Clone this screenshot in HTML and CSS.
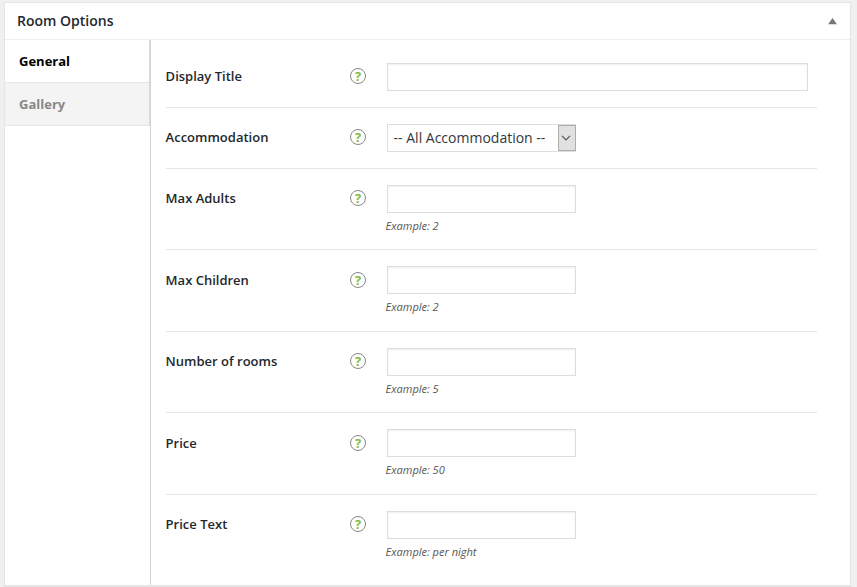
FILE: index.html
```
<!DOCTYPE html>
<html lang="en">
<head>
<meta charset="utf-8">
<title>Room Options</title>
<link rel="stylesheet" href="styles.css">
</head>
<body>
<section class="panel">
  <header class="panel-header">
    <h2>Room Options</h2>
    <svg class="toggle" width="9" height="7" viewBox="0 0 9 7"><path d="M4.5 0 8.9 6.3H.1z" fill="#72777c"/></svg>
  </header>
  <div class="panel-body">
    <nav class="tabs">
      <a class="tab active">General</a>
      <a class="tab">Gallery</a>
    </nav>
    <div class="fields">
      <div class="row">
        <label>Display Title</label><span class="help">?</span>
        <div class="control"><input class="wide" type="text"></div>
      </div>
      <div class="row">
        <label>Accommodation</label><span class="help">?</span>
        <div class="control"><div class="select"><span>-- All Accommodation --</span><i><svg width="10" height="6" viewBox="0 0 10 6"><path d="M1 .8 5 4.8 9 .8" fill="none" stroke="#555" stroke-width="1.2"/></svg></i></div></div>
      </div>
      <div class="row noted">
        <label>Max Adults</label><span class="help">?</span>
        <div class="control"><input type="text"><p>Example: 2</p></div>
      </div>
      <div class="row noted low">
        <label>Max Children</label><span class="help">?</span>
        <div class="control"><input type="text"><p>Example: 2</p></div>
      </div>
      <div class="row noted">
        <label>Number of rooms</label><span class="help">?</span>
        <div class="control"><input type="text"><p>Example: 5</p></div>
      </div>
      <div class="row noted low">
        <label>Price</label><span class="help">?</span>
        <div class="control"><input type="text"><p>Example: 50</p></div>
      </div>
      <div class="row noted">
        <label>Price Text</label><span class="help">?</span>
        <div class="control"><input type="text"><p>Example: per night</p></div>
      </div>
    </div>
  </div>
</section>
</body>
</html>
```
FILE: styles.css
```
* { box-sizing: border-box; }
body {
  margin: 0;
  height: 587px;
  padding: 2px 6px 1px 4px;
  overflow: hidden;
  background: #f0f0f0;
  font-family: "Open Sans", sans-serif;
  font-size: 13px;
  color: #23282d;
}
.panel {
  display: flex;
  flex-direction: column;
  height: 584px;
  background: #fff;
  border: 1px solid #e5e5e5;
  box-shadow: 0 1px 1px rgba(0, 0, 0, .04);
}
.panel-header {
  display: flex;
  align-items: center;
  justify-content: space-between;
  height: 37px;
  padding: 0 13px 0 12px;
  border-bottom: 1px solid #eee;
}
h2 { margin: 0; font-size: 14px; line-height: 20px; font-weight: 600; }
.panel-body { display: flex; flex: 1; }
.tabs { width: 146px; border-right: 1px solid #d5d5d5; }
.tab {
  display: block;
  height: 43px;
  padding-left: 14px;
  line-height: 42px;
  font-weight: 700;
  color: #888;
  background: #f4f4f4;
  border-right: 1px solid #d8d8d8;
  border-bottom: 1px solid #e5e5e5;
}
.tab.active { color: #000; background: #fff; }
.fields { width: 666px; padding: 7px 0 0 15px; }
.row {
  display: flex;
  align-items: flex-start;
  height: 61px;
  padding-top: 16px;
  border-bottom: 1px solid #e5e5e5;
}
.row.noted { height: 81px; }
.row.low { height: 82px; }
.row:last-child { border-bottom: 0; }
label { width: 184px; line-height: 18px; margin-top: 4px; font-weight: 600; text-indent: -.4px; }
.help {
  width: 16px;
  height: 16px;
  margin-top: 5px;
  border: 1px solid #888;
  border-radius: 50%;
  text-align: center;
  font-size: 13px;
  line-height: 14px;
  font-weight: 700;
  color: #84bd3c;
}
.low label { margin-top: 5px; }
.low .help { margin-top: 6px; }
.control { margin-left: 21px; }
input {
  display: block;
  width: 189px;
  height: 28px;
  margin: 0;
  padding: 3px 5px;
  border: 1px solid #ddd;
  background: #fff;
  box-shadow: inset 0 1px 2px rgba(0, 0, 0, .07);
  font: inherit;
  outline: 0;
}
input.wide { width: 421px; }
.control p {
  margin: 5px 0 0 -1px;
  font-size: 11px;
  line-height: 16px;
  font-style: italic;
  color: #555;
  text-indent: -.4px;
}
.select {
  display: flex;
  justify-content: space-between;
  width: 189px;
  height: 28px;
  padding-left: 5.6px;
  border: 1px solid #ddd;
  font-size: 14px;
  line-height: 26px;
  color: #32373c;
  white-space: nowrap;
}
.select i {
  display: flex;
  align-items: center;
  justify-content: center;
  width: 18px;
  margin-right: -1px;
  height: 26px;
  padding-right: 2px;
  background: #e1e1e1;
  border: 1px solid #adadad;
}
```
